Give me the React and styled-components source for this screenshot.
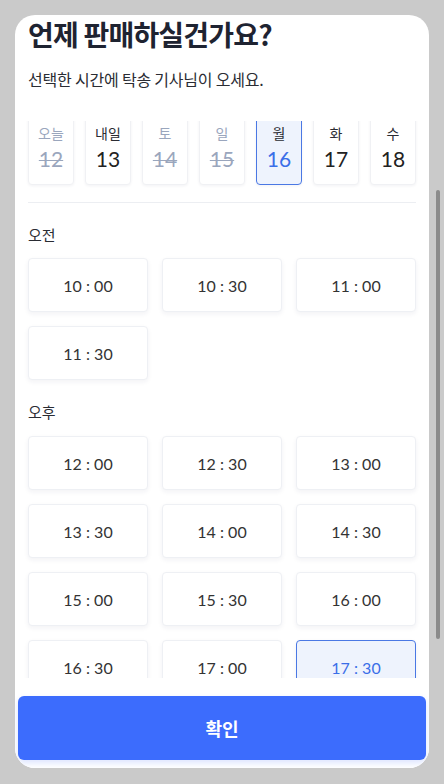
import React, { useEffect, useRef } from "react";
import styled, { createGlobalStyle } from "styled-components";

const GlobalStyle = createGlobalStyle`
  html, body {
    margin: 0;
    padding: 0;
    background: #cacaca;
  }
  * {
    box-sizing: border-box;
  }
`;

const Page = styled.div`
  position: relative;
  width: 444px;
  height: 784px;
  padding: 15px 15px 16px;
  background: #cacaca;
  font-family: Lato, "Noto Sans CJK KR", sans-serif;
`;

const Sheet = styled.div`
  width: 414px;
  height: 753px;
  display: flex;
  flex-direction: column;
  background: #fff;
  border-radius: 20px;
  overflow: hidden;
`;

const Header = styled.div`
  padding: 1px 13px 0;
  height: 106px;
  flex-shrink: 0;
  h1 {
    margin: 0;
    font-family: "Noto Sans CJK KR", sans-serif;
    font-size: 28px;
    line-height: 36px;
    font-weight: 700;
    letter-spacing: -0.8px;
    color: #1e2331;
  }
  p {
    margin: 17px 0 0;
    font-family: "Noto Sans CJK KR", sans-serif;
    font-size: 16px;
    line-height: 20px;
    letter-spacing: -0.2px;
    color: #2a2c33;
  }
`;

const Scroll = styled.div`
  flex: 1;
  overflow-y: auto;
  scrollbar-width: none;
  &::-webkit-scrollbar {
    display: none;
  }
`;

const Content = styled.div`
  padding: 0 13px 20px;
`;

const DateRow = styled.div`
  display: grid;
  grid-template-columns: repeat(7, 46px);
  justify-content: space-between;
  padding-bottom: 17px;
  border-bottom: 1px solid #eceef2;
`;

const DateCard = styled.div`
  height: 72px;
  padding-top: 10px;
  display: flex;
  flex-direction: column;
  align-items: center;
  border-radius: 4px;
  border: 1px solid ${(p) => (p.$selected ? "#4a78e4" : "#f0f1f4")};
  background: ${(p) => (p.$selected ? "#eef3fd" : "#fff")};
  box-shadow: 0 1px 3px rgba(30, 40, 80, 0.06);
`;

const DayLabel = styled.span`
  font-family: "Noto Sans CJK KR", sans-serif;
  font-size: 14px;
  line-height: 18px;
  color: ${(p) => (p.$disabled ? "#9aa6bd" : "#2a2c33")};
`;

const DayNum = styled.span`
  margin-top: 4px;
  font-size: 21px;
  line-height: 26px;
  color: ${(p) => (p.$selected ? "#3a6ee8" : p.$disabled ? "#9aa6bd" : "#222")};
  text-decoration: ${(p) => (p.$disabled ? "line-through" : "none")};
  text-decoration-thickness: 1px;
`;

const SectionLabel = styled.div`
  font-family: "Noto Sans CJK KR", sans-serif;
  font-size: 15px;
  line-height: 20px;
  color: #2a2c33;
  margin: 22px 0 ${(p) => (p.$tight ? "13px" : "14px")};
`;

const SlotGrid = styled.div`
  display: grid;
  grid-template-columns: repeat(3, 1fr);
  gap: 14px;
`;

const Slot = styled.div`
  height: 54px;
  display: flex;
  align-items: center;
  justify-content: center;
  border-radius: 4px;
  border: 1px solid ${(p) => (p.$selected ? "#4a78e4" : "#eef0f4")};
  background: ${(p) => (p.$selected ? "#eef3fd" : "#fff")};
  box-shadow: 0 2px 5px rgba(30, 40, 80, 0.06);
  font-size: 16px;
  color: ${(p) => (p.$selected ? "#3a6ee8" : "#333")};
`;

const Footer = styled.div`
  flex-shrink: 0;
  padding: 18px 3px 8px;
  background: #fff;
`;

const ConfirmButton = styled.button`
  width: 100%;
  height: 64px;
  border: none;
  border-radius: 6px;
  background: #3c6cfd;
  color: #fff;
  font-family: "Noto Sans CJK KR", sans-serif;
  font-size: 18px;
  font-weight: 700;
  box-shadow: 0 3px 6px rgba(60, 108, 253, 0.18);
`;

const ScrollThumb = styled.div`
  position: absolute;
  left: 436px;
  top: 190px;
  width: 4px;
  height: 449px;
  border-radius: 2px;
  background: #8b8b8b;
`;

const dates = [
  { day: "오늘", num: 12, disabled: true },
  { day: "내일", num: 13 },
  { day: "토", num: 14, disabled: true },
  { day: "일", num: 15, disabled: true },
  { day: "월", num: 16, selected: true },
  { day: "화", num: 17 },
  { day: "수", num: 18 },
];

const morning = ["10 : 00", "10 : 30", "11 : 00", "11 : 30"];
const afternoon = [
  "12 : 00", "12 : 30", "13 : 00",
  "13 : 30", "14 : 00", "14 : 30",
  "15 : 00", "15 : 30", "16 : 00",
  "16 : 30", "17 : 00", "17 : 30",
];

const App = () => {
  const scrollRef = useRef(null);

  useEffect(() => {
    if (scrollRef.current) scrollRef.current.scrollTop = 8;
  }, []);

  return (
    <>
      <GlobalStyle />
      <Page>
        <Sheet>
          <Header>
            <h1>언제 판매하실건가요?</h1>
            <p>선택한 시간에 탁송 기사님이 오세요.</p>
          </Header>
          <Scroll ref={scrollRef}>
            <Content>
              <DateRow>
                {dates.map((d) => (
                  <DateCard key={d.num} $selected={d.selected}>
                    <DayLabel $disabled={d.disabled}>{d.day}</DayLabel>
                    <DayNum $disabled={d.disabled} $selected={d.selected}>
                      {d.num}
                    </DayNum>
                  </DateCard>
                ))}
              </DateRow>
              <SectionLabel $tight>오전</SectionLabel>
              <SlotGrid>
                {morning.map((t) => (
                  <Slot key={t}>{t}</Slot>
                ))}
              </SlotGrid>
              <SectionLabel>오후</SectionLabel>
              <SlotGrid>
                {afternoon.map((t) => (
                  <Slot key={t} $selected={t === "17 : 30"}>
                    {t}
                  </Slot>
                ))}
              </SlotGrid>
            </Content>
          </Scroll>
          <Footer>
            <ConfirmButton>확인</ConfirmButton>
          </Footer>
        </Sheet>
        <ScrollThumb />
      </Page>
    </>
  );
};

export default App;
